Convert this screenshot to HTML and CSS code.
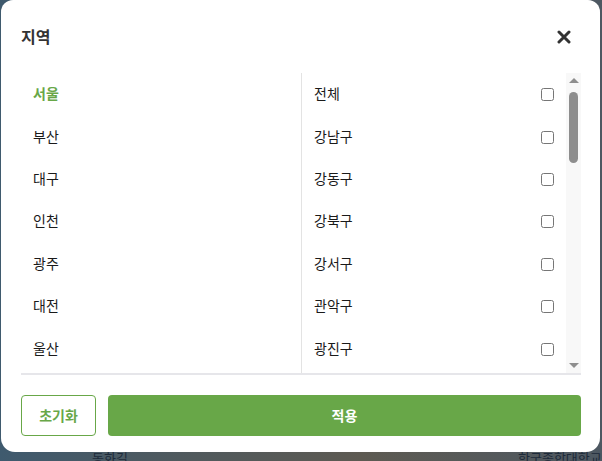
FILE: index.html
```html
<!DOCTYPE html>
<html lang="ko">
<head>
<meta charset="utf-8">
<title>지역</title>
<link rel="stylesheet" href="styles.css">
</head>
<body>
<div class="map">
  <span class="map-label label-a">동화길</span>
  <span class="map-label label-b">한국종합대학교</span>
</div>
<div class="overlay">
  <div class="modal">
    <div class="modal-header">
      <h2 class="modal-title">지역</h2>
      <button class="close-btn" aria-label="닫기">
        <svg width="14" height="14" viewBox="0 0 14 14"><path d="M2 2 L12 12 M12 2 L2 12" stroke="#333" stroke-width="3" stroke-linecap="round"/></svg>
      </button>
    </div>
    <div class="picker">
      <ul class="city-list">
        <li class="city active">서울</li>
        <li class="city">부산</li>
        <li class="city">대구</li>
        <li class="city">인천</li>
        <li class="city">광주</li>
        <li class="city">대전</li>
        <li class="city">울산</li>
      </ul>
      <div class="district-pane">
        <ul class="district-list">
          <li class="district"><span>전체</span><input type="checkbox"></li>
          <li class="district"><span>강남구</span><input type="checkbox"></li>
          <li class="district"><span>강동구</span><input type="checkbox"></li>
          <li class="district"><span>강북구</span><input type="checkbox"></li>
          <li class="district"><span>강서구</span><input type="checkbox"></li>
          <li class="district"><span>관악구</span><input type="checkbox"></li>
          <li class="district"><span>광진구</span><input type="checkbox"></li>
          <li class="district"><span>구로구</span><input type="checkbox"></li>
        </ul>
        <div class="scrollbar">
          <div class="sb-btn"><span class="tri-up"></span></div>
          <div class="sb-track"><div class="sb-thumb"></div></div>
          <div class="sb-btn"><span class="tri-down"></span></div>
        </div>
      </div>
    </div>
    <div class="modal-footer">
      <button class="btn-reset">초기화</button>
      <button class="btn-apply">적용</button>
    </div>
  </div>
</div>
</body>
</html>
```

FILE: styles.css
```css
* { box-sizing: border-box; }
html, body {
  margin: 0;
  width: 602px;
  height: 461px;
  overflow: hidden;
}
body {
  font-family: "Noto Sans CJK KR", "Noto Sans", sans-serif;
  background: #4a545c;
  position: relative;
}
.map {
  position: absolute;
  inset: 0;
  background: linear-gradient(90deg, #3f5a6e 0%, #505a5e 30%, #5d5a52 60%, #4d5862 100%);
}
.map-label {
  position: absolute;
  font-size: 13px;
  line-height: 16px;
  color: #1d2a3a;
}
.label-a { left: 92px; top: 450px; }
.label-b { left: 518px; top: 450px; }
.overlay {
  position: absolute;
  inset: 0;
  padding-left: 1px;
}
.modal {
  width: 599px;
  height: 452px;
  background: #fff;
  border-radius: 12px 12px 14px 14px;
  padding: 0 19px 16px 20px;
  display: flex;
  flex-direction: column;
}
.modal-header {
  height: 73px;
  padding-bottom: 1px;
  display: flex;
  align-items: center;
  justify-content: space-between;
}
.modal-title {
  margin: 0;
  font-size: 16px;
  font-weight: 700;
  color: #333;
}
.close-btn {
  border: 0;
  background: none;
  padding: 0;
  margin-right: 10px;
  margin-top: 2px;
  width: 14px;
  height: 14px;
  display: flex;
}
.picker {
  height: 302px;
  display: grid;
  grid-template-columns: 280px 280px;
  border-bottom: 2px solid #e6e6ea;
}
.city-list, .district-list {
  list-style: none;
  margin: 0;
  padding: 0;
}
.city {
  height: 42.4px;
  display: flex;
  align-items: center;
  padding: 0 0 2px 12px;
  font-size: 14px;
  color: #1a1a1a;
}
.city.active {
  color: #68a748;
  font-weight: 700;
}
.district-pane {
  border-left: 1px solid #e3e3e3;
  display: flex;
  height: 300px;
}
.district-list {
  flex: 1;
  overflow: hidden;
}
.district {
  height: 42.4px;
  display: flex;
  align-items: center;
  justify-content: space-between;
  padding: 0 9px 2px 12px;
  font-size: 14px;
  color: #1a1a1a;
}
.district input {
  margin: 3px 3px 0 0;
  width: 13px;
  height: 13px;
}
.scrollbar {
  width: 15px;
  background: #f8f8f8;
  display: flex;
  flex-direction: column;
}
.sb-btn {
  height: 15px;
  display: flex;
  align-items: center;
  justify-content: center;
}
.tri-up, .tri-down {
  width: 0;
  height: 0;
  border-left: 5px solid transparent;
  border-right: 5px solid transparent;
}
.tri-up { border-bottom: 5px solid #8e8e8e; }
.tri-down { border-top: 5px solid #8e8e8e; }
.sb-track {
  flex: 1;
  padding: 4px 3px;
}
.sb-thumb {
  width: 9px;
  height: 71px;
  border-radius: 5px;
  background: #8e8e8e;
}
.modal-footer {
  display: flex;
  gap: 12px;
  padding-top: 20px;
}
.btn-reset, .btn-apply {
  height: 41px;
  border-radius: 4px;
  font-family: inherit;
  font-size: 14px;
  font-weight: 700;
  cursor: pointer;
  padding: 0 0 2px;
}
.btn-reset {
  width: 75px;
  background: #fff;
  border: 1px solid #68a748;
  color: #68a748;
}
.btn-apply {
  flex: 1;
  background: #68a748;
  border: 0;
  color: #fff;
}
```
